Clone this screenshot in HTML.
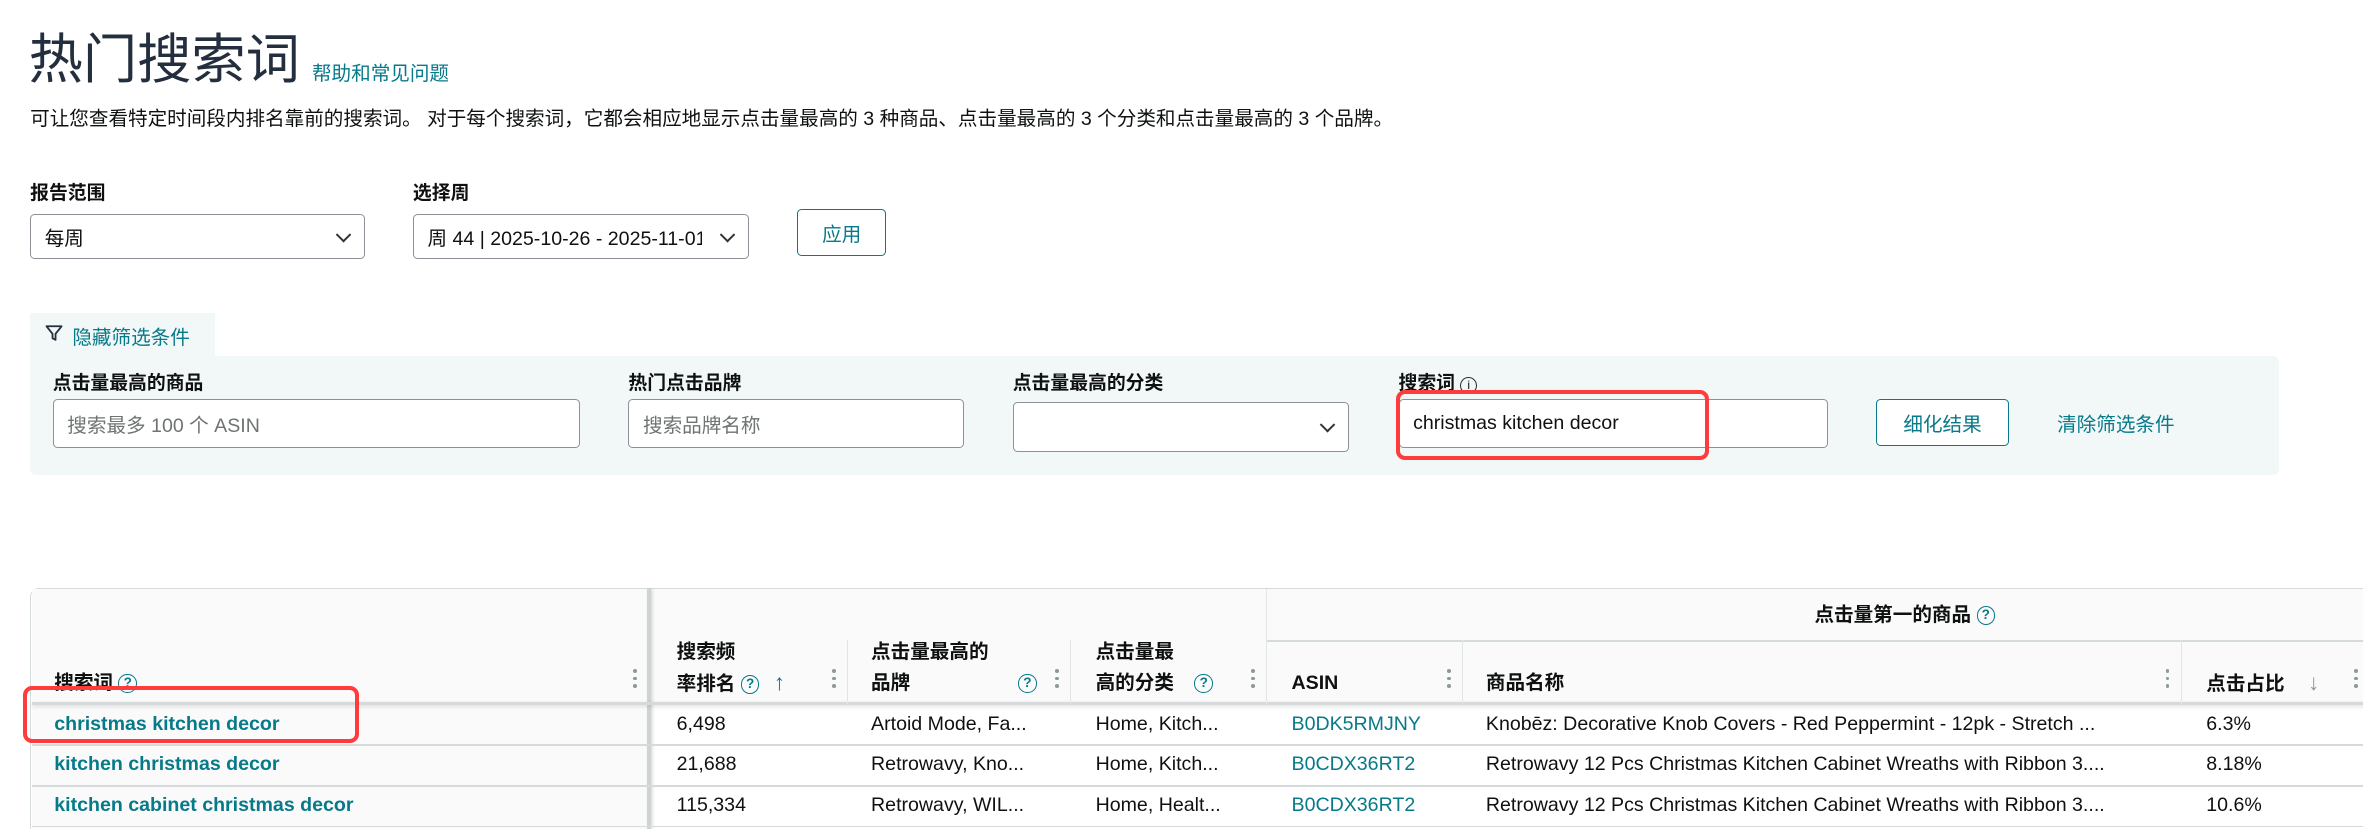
<!DOCTYPE html>
<html><head><meta charset="utf-8"><style>
html,body{margin:0;padding:0;background:#fff;overflow:hidden}
body{width:1568px;height:550px;zoom:1.50702;position:relative;font-family:"Liberation Sans","Noto Sans CJK SC",sans-serif;color:#0f1111;font-size:13px}
.a{position:absolute;white-space:nowrap}
.teal{color:#077a8a}
.lbl{font-weight:bold;font-size:12.5px}
.sel,.inp{position:absolute;box-sizing:border-box;border:1px solid #8d9096;border-radius:3px;background:#fff;font-size:13px;display:flex;align-items:center;padding-left:9px;white-space:nowrap}
.chev{position:absolute;right:10px;top:50%;width:6px;height:6px;border-right:1.5px solid #333;border-bottom:1.5px solid #333;transform:translateY(-70%) rotate(45deg)}
.btn{position:absolute;box-sizing:border-box;border:1px solid #077a8a;border-radius:3px;background:#fff;color:#077a8a;display:flex;align-items:center;justify-content:center;font-size:13px}
.ph{color:#6f7373}
.q{display:inline-block;width:11px;height:11px;border:1.2px solid #077a8a;border-radius:50%;color:#077a8a;font-size:9px;line-height:11px;text-align:center;font-weight:bold;vertical-align:middle}
.red{position:absolute;border:3px solid #ff3b3b;border-radius:6px;box-sizing:border-box}
.h{position:absolute;font-weight:bold;font-size:13px;line-height:20px}
.vl{position:absolute;width:1px;background:#e3e6e6}
.hl{position:absolute;height:1px;background:#d5dbdb}
.dots{position:absolute;width:3px;font-size:0}
.dots i{display:block;width:2.5px;height:2.5px;border-radius:50%;background:#8d9a9a;margin-bottom:2.5px}
.c{position:absolute;font-size:13px;line-height:27px;white-space:nowrap}
.lk{color:#077a8a;font-weight:bold}
</style></head><body>
<div class="a" style="left:19px;top:14px;font-size:36px;color:#232f3e;line-height:52px">热门搜索词</div>
<div class="a teal" style="left:207px;top:38px;font-size:13px">帮助和常见问题</div>
<div class="a" style="left:20px;top:68px;font-size:13px">可让您查看特定时间段内排名靠前的搜索词。 对于每个搜索词，它都会相应地显示点击量最高的 3 种商品、点击量最高的 3 个分类和点击量最高的 3 个品牌。</div>

<div class="a lbl" style="left:20px;top:118px">报告范围</div>
<div class="a lbl" style="left:274px;top:118px">选择周</div>
<div class="sel" style="left:20px;top:142px;width:222px;height:30px">每周<span class="chev"></span></div>
<div class="sel" style="left:274px;top:142px;width:223px;height:30px;overflow:hidden"><span style="display:block;width:182px;overflow:hidden;white-space:nowrap">周 44 | 2025-10-26 - 2025-11-01</span><span class="chev"></span></div>
<div class="btn" style="left:529px;top:139px;width:59px;height:31px">应用</div>

<div class="a" style="left:20px;top:208px;width:123px;height:29px;background:#f2f7f7"></div>
<svg class="a" style="left:30px;top:215px" width="12" height="12" viewBox="0 0 12 12"><path d="M1 1.5h10L7 6.5v4L5 9.5v-3z" fill="none" stroke="#232f3e" stroke-width="1.2" stroke-linejoin="round"/></svg>
<div class="a teal" style="left:48px;top:213px">隐藏筛选条件</div>
<div class="a" style="left:20px;top:236px;width:1492px;height:79px;background:#f2f7f7;border-radius:0 4px 4px 4px"></div>
<div class="a lbl" style="left:35px;top:244px">点击量最高的商品</div>
<div class="a lbl" style="left:417px;top:244px">热门点击品牌</div>
<div class="a lbl" style="left:672px;top:244px">点击量最高的分类</div>
<div class="a lbl" style="left:928px;top:244px">搜索词 <span style="display:inline-block;width:10px;height:10px;border:1px solid #232f3e;border-radius:50%;font-size:8px;line-height:10px;text-align:center;font-weight:normal">i</span></div>
<div class="inp" style="left:35px;top:265px;width:350px;height:32px"><span class="ph">搜索最多 100 个 ASIN</span></div>
<div class="inp" style="left:417px;top:265px;width:223px;height:32px"><span class="ph">搜索品牌名称</span></div>
<div class="sel" style="left:672px;top:267px;width:223px;height:33px"><span class="chev"></span></div>
<div class="inp" style="left:928px;top:265px;width:285px;height:32px">christmas kitchen decor</div>
<div class="btn" style="left:1245px;top:265px;width:88px;height:31px">细化结果</div>
<div class="a teal" style="left:1365px;top:271px">清除筛选条件</div>
<div class="red" style="left:926px;top:259px;width:208px;height:46px"></div>

<!-- table -->
<div class="a" style="left:20px;top:390px;width:1560px;height:160px;border-top:1px solid #d5dbdb;border-left:1px solid #d5dbdb;border-radius:6px 0 0 0;background:#fff"></div>
<div class="a" style="left:21px;top:391px;width:1560px;height:76px;background:#fafafa"></div>
<div class="a" style="left:21px;top:467px;width:409px;height:83px;background:#fafafa"></div>
<div class="a" style="left:429px;top:391px;width:3px;height:159px;background:#d0d3d3;box-shadow:1px 0 2px rgba(0,0,0,.15)"></div>
<div class="a" style="left:21px;top:466px;width:1560px;height:2px;background:#d5d9d9;box-shadow:0 1px 3px rgba(0,0,0,.15)"></div>
<div class="hl" style="left:840px;top:425px;width:740px"></div>
<div class="hl" style="left:21px;top:494px;width:1560px"></div>
<div class="hl" style="left:21px;top:521px;width:1560px"></div>
<div class="hl" style="left:21px;top:548px;width:1560px"></div>
<div class="vl" style="left:562px;top:425px;height:42px"></div>
<div class="vl" style="left:710px;top:425px;height:42px"></div>
<div class="vl" style="left:840px;top:391px;height:76px"></div>
<div class="vl" style="left:970px;top:425px;height:42px"></div>
<div class="vl" style="left:1447px;top:425px;height:42px"></div>

<div class="h" style="left:1204px;top:398px">点击量第一的商品 <span class="q">?</span></div>
<div class="h" style="left:36px;top:443px">搜索词 <span class="q">?</span></div>
<div class="h" style="left:449px;top:423px">搜索频<br>率排名 <span class="q">?</span> <span class="teal" style="font-weight:normal;font-size:15px;margin-left:6px">↑</span></div>
<div class="h" style="left:578px;top:423px">点击量最高的<br>品牌 <span class="q" style="margin-left:68px">?</span></div>
<div class="h" style="left:727px;top:423px">点击量最<br>高的分类 <span class="q" style="margin-left:10px">?</span></div>
<div class="h" style="left:857px;top:443px">ASIN</div>
<div class="h" style="left:986px;top:443px">商品名称</div>
<div class="h" style="left:1464px;top:443px">点击占比 <span style="color:#8d9a9a;font-weight:normal;font-size:15px;margin-left:12px">↓</span></div>
<div class="dots" style="left:420px;top:444px"><i></i><i></i><i></i></div>
<div class="dots" style="left:552px;top:444px"><i></i><i></i><i></i></div>
<div class="dots" style="left:700px;top:444px"><i></i><i></i><i></i></div>
<div class="dots" style="left:830px;top:444px"><i></i><i></i><i></i></div>
<div class="dots" style="left:960px;top:444px"><i></i><i></i><i></i></div>
<div class="dots" style="left:1437px;top:444px"><i></i><i></i><i></i></div>
<div class="dots" style="left:1562px;top:444px"><i></i><i></i><i></i></div>

<div class="c lk" style="left:36px;top:467px">christmas kitchen decor</div>
<div class="c lk" style="left:36px;top:494px">kitchen christmas decor</div>
<div class="c lk" style="left:36px;top:521px">kitchen cabinet christmas decor</div>
<div class="c" style="left:449px;top:467px">6,498</div>
<div class="c" style="left:449px;top:494px">21,688</div>
<div class="c" style="left:449px;top:521px">115,334</div>
<div class="c" style="left:578px;top:467px">Artoid Mode, Fa...</div>
<div class="c" style="left:578px;top:494px">Retrowavy, Kno...</div>
<div class="c" style="left:578px;top:521px">Retrowavy, WIL...</div>
<div class="c" style="left:727px;top:467px">Home, Kitch...</div>
<div class="c" style="left:727px;top:494px">Home, Kitch...</div>
<div class="c" style="left:727px;top:521px">Home, Healt...</div>
<div class="c teal" style="left:857px;top:467px">B0DK5RMJNY</div>
<div class="c teal" style="left:857px;top:494px">B0CDX36RT2</div>
<div class="c teal" style="left:857px;top:521px">B0CDX36RT2</div>
<div class="c" style="left:986px;top:467px">Knobēz: Decorative Knob Covers - Red Peppermint - 12pk - Stretch ...</div>
<div class="c" style="left:986px;top:494px">Retrowavy 12 Pcs Christmas Kitchen Cabinet Wreaths with Ribbon 3....</div>
<div class="c" style="left:986px;top:521px">Retrowavy 12 Pcs Christmas Kitchen Cabinet Wreaths with Ribbon 3....</div>
<div class="c" style="left:1464px;top:467px">6.3%</div>
<div class="c" style="left:1464px;top:494px">8.18%</div>
<div class="c" style="left:1464px;top:521px">10.6%</div>
<div class="red" style="left:15px;top:455px;width:223px;height:38px"></div>
</body></html>
